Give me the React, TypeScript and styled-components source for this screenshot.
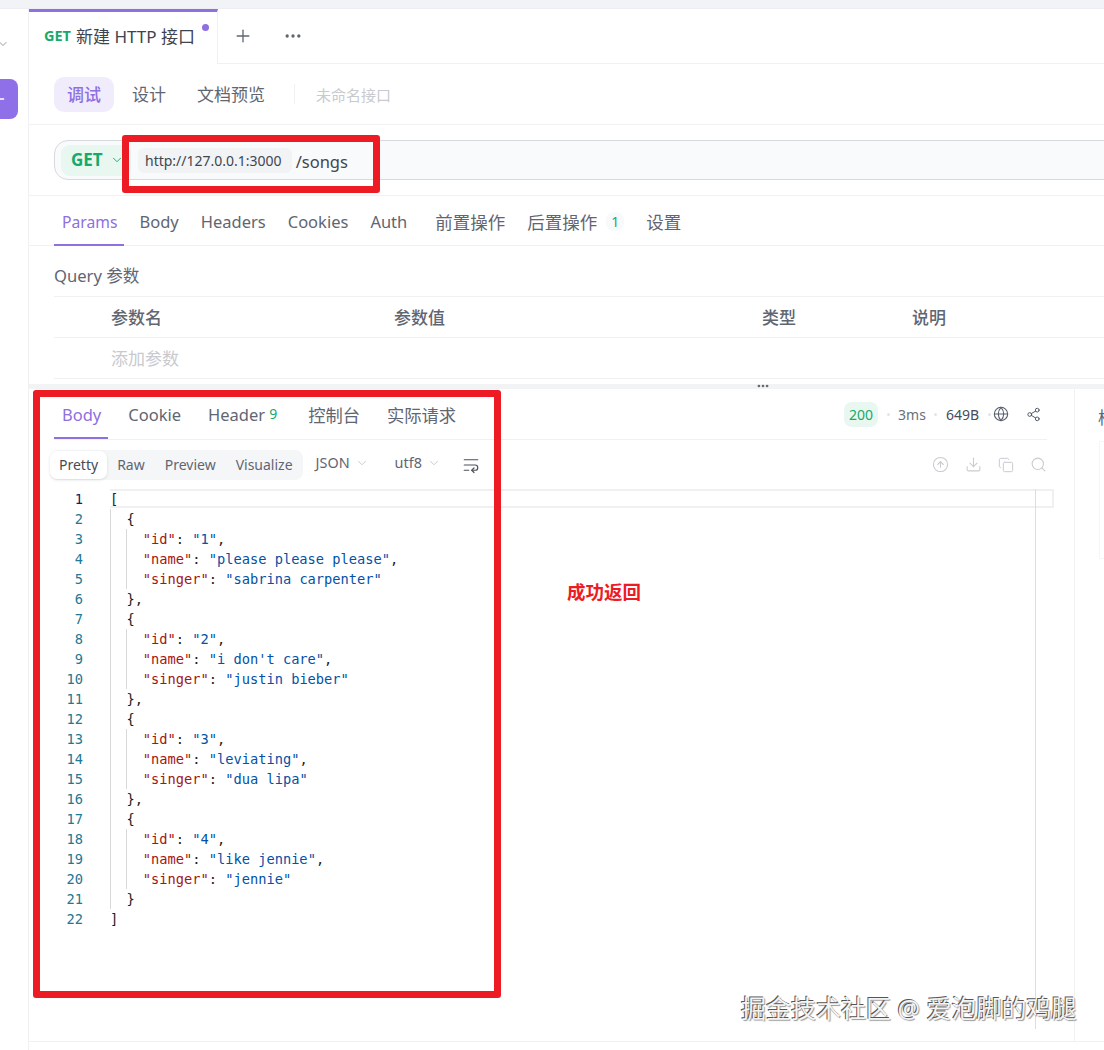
import { FC, Fragment } from 'react';
import styled, { createGlobalStyle } from 'styled-components';
import { ChevronDown, Copy, Download, Ellipsis, Globe, Plus, Search, Share2, CircleArrowUp, WrapText } from 'lucide-react';

const PURPLE = '#8e70e0';
const GREEN = '#17a96c';
const LINE = '#f0f1f3';
const TEXT = '#5f6672';
const SANS = '"Noto Sans", "Noto Sans CJK SC", sans-serif';

const songs = [
	{ id: '1', name: 'please please please', singer: 'sabrina carpenter' },
	{ id: '2', name: "i don't care", singer: 'justin bieber' },
	{ id: '3', name: 'leviating', singer: 'dua lipa' },
	{ id: '4', name: 'like jennie', singer: 'jennie' },
];

const requestTabs = ['Body', 'Headers', 'Cookies', 'Auth'];

const App: FC = () => {
	return (
		<>
			<GlobalStyle />
			<Page>
				<TopStrip />
				<Main>
					<Sidebar>
						<SideChevron>
							<ChevronDown size={12} strokeWidth={1.5} />
						</SideChevron>
						<NewButton>
							<Plus size={16} strokeWidth={2} />
						</NewButton>
					</Sidebar>
					<Content>
						<TabBar>
							<FileTab>
								<TabMethod>GET</TabMethod>
								<TabTitle>新建 HTTP 接口</TabTitle>
								<UnsavedDot />
							</FileTab>
							<TabAction>
								<Plus size={20} strokeWidth={1.6} />
							</TabAction>
							<TabAction>
								<Ellipsis size={20} strokeWidth={2} />
							</TabAction>
						</TabBar>

						<ModeBar>
							<ModePill $active>调试</ModePill>
							<ModePill>设计</ModePill>
							<ModePill>文档预览</ModePill>
							<ModeDivider />
							<ApiName>未命名接口</ApiName>
						</ModeBar>

						<UrlRow>
							<UrlBox>
								<MethodPill>
									GET
									<ChevronDown size={14} strokeWidth={1.6} />
								</MethodPill>
								<BaseUrl>http://127.0.0.1:3000</BaseUrl>
								<UrlPath>/songs</UrlPath>
							</UrlBox>
						</UrlRow>

						<RequestTabs>
							<ParamsTab $active>Params</ParamsTab>
							{requestTabs.map((tab) => (
								<RequestTab key={tab}>{tab}</RequestTab>
							))}
							<RequestTab $cjk $offset={6}>
								前置操作
							</RequestTab>
							<RequestTab $cjk>
								后置操作
								<CountBadge>1</CountBadge>
							</RequestTab>
							<RequestTab $cjk>设置</RequestTab>
						</RequestTabs>

						<QuerySection>
							<QueryTitle>Query 参数</QueryTitle>
							<ParamHead>
								<ParamCell $width={283}>参数名</ParamCell>
								<ParamCell $width={368}>参数值</ParamCell>
								<ParamCell $width={150}>类型</ParamCell>
								<ParamCell $width={150}>说明</ParamCell>
							</ParamHead>
							<ParamRow>添加参数</ParamRow>
						</QuerySection>

						<Resizer>
							<ResizeDots>
								<Ellipsis size={14} strokeWidth={2.6} />
							</ResizeDots>
						</Resizer>

						<ResponseArea>
							<ResponseMain>
								<ResponseHead>
									<ResponseTab $active>Body</ResponseTab>
									<ResponseTab>Cookie</ResponseTab>
									<ResponseTab>
										Header<HeaderCount>9</HeaderCount>
									</ResponseTab>
									<ResponseTab $cjk>控制台</ResponseTab>
									<ResponseTab $cjk>实际请求</ResponseTab>
									<Stats>
										<StatusPill>200</StatusPill>
										<StatDot />
										<Stat>3ms</Stat>
										<StatDot />
										<Stat $dark>649B</Stat>
										<StatDot />
										<StatIcon>
											<Globe size={16} strokeWidth={1.6} />
										</StatIcon>
										<StatIcon>
											<Share2 size={15} strokeWidth={1.6} />
										</StatIcon>
									</Stats>
								</ResponseHead>

								<Toolbar>
									<Segments>
										<Segment $active>Pretty</Segment>
										<Segment>Raw</Segment>
										<Segment>Preview</Segment>
										<Segment>Visualize</Segment>
									</Segments>
									<FormatSelect $gap={13}>
										JSON
										<ChevronDown size={14} strokeWidth={1.2} />
									</FormatSelect>
									<FormatSelect $gap={24}>
										utf8
										<ChevronDown size={14} strokeWidth={1.2} />
									</FormatSelect>
									<WrapButton>
										<WrapText size={18} strokeWidth={1.6} />
									</WrapButton>
									<ToolIcons>
										<CircleArrowUp size={17} strokeWidth={1.5} />
										<Download size={17} strokeWidth={1.5} />
										<Copy size={16} strokeWidth={1.5} />
										<Search size={17} strokeWidth={1.5} />
									</ToolIcons>
								</Toolbar>

								<Editor>
									<Gutter>
										{Array.from({ length: 22 }, (_, i) => (
											<LineNo key={i} $current={i === 0}>
												{i + 1}
											</LineNo>
										))}
									</Gutter>
									<Code>
										<CurrentLine />
										<CodeLine>[</CodeLine>
										<IndentGuide>
											{songs.map((song, i) => (
												<Fragment key={song.id}>
													<CodeLine>{'{'}</CodeLine>
													<IndentGuide>
														<CodeLine>
															<JsonKey>"id"</JsonKey>: <JsonStr>"{song.id}"</JsonStr>,
														</CodeLine>
														<CodeLine>
															<JsonKey>"name"</JsonKey>: <JsonStr>"{song.name}"</JsonStr>,
														</CodeLine>
														<CodeLine>
															<JsonKey>"singer"</JsonKey>: <JsonStr>"{song.singer}"</JsonStr>
														</CodeLine>
													</IndentGuide>
													<CodeLine>{i < songs.length - 1 ? '},' : '}'}</CodeLine>
												</Fragment>
											))}
										</IndentGuide>
										<CodeLine>]</CodeLine>
									</Code>
								</Editor>
							</ResponseMain>
							<SidePanel>
								<SideTitle>校验响应</SideTitle>
								<SideBox />
							</SidePanel>
						</ResponseArea>
						<BottomBar />
					</Content>
				</Main>

				<UrlMark />
				<ResponseMark />
				<MarkNote>成功返回</MarkNote>
				<Watermark>掘金技术社区 @ 爱泡脚的鸡腿</Watermark>
			</Page>
		</>
	);
};

const GlobalStyle = createGlobalStyle`
	html, body {
		margin: 0;
		padding: 0;
		background: #fff;
		overflow: hidden;
	}
	* {
		box-sizing: border-box;
	}
`;

const Page = styled.div`
	position: relative;
	width: 1104px;
	height: 1050px;
	overflow: hidden;
	font-family: ${SANS};
	color: ${TEXT};
	background: #fff;
`;

const TopStrip = styled.div`
	height: 9px;
	background: #f1f3f6;
	border-bottom: 1px solid #eceef1;
`;

const Main = styled.div`
	display: flex;
	height: 1041px;
`;

const Sidebar = styled.div`
	width: 29px;
	flex: none;
	border-right: 1px solid ${LINE};
`;

const SideChevron = styled.div`
	display: flex;
	height: 70px;
	padding: 29px 0 0 0;
	color: #777;
	margin-left: -3px;
`;

const NewButton = styled.div`
	display: flex;
	align-items: center;
	width: 18px;
	height: 40px;
	border-radius: 0 8px 8px 0;
	background: #9070e8;
	color: #fff;
	overflow: hidden;

	svg {
		margin-left: -9px;
		flex: none;
	}
`;

const Content = styled.div`
	flex: 1;
	min-width: 0;
	display: flex;
	flex-direction: column;
`;

const TabBar = styled.div`
	display: flex;
	align-items: center;
	height: 55px;
	flex: none;
	border-bottom: 1px solid ${LINE};
`;

const FileTab = styled.div`
	position: relative;
	display: flex;
	align-items: center;
	gap: 5px;
	width: 189px;
	height: 55px;
	padding: 0 0 6px 15px;
	background: #fff;
	border-top: 3px solid ${PURPLE};
	border-right: 1px solid ${LINE};
	margin-bottom: -1px;
`;

const TabMethod = styled.span`
	font-size: 14.5px;
	font-weight: 700;
	color: ${GREEN};
`;

const TabTitle = styled.span`
	font-size: 17px;
	color: #3d4350;
`;

const UnsavedDot = styled.span`
	position: absolute;
	top: 12px;
	left: 173px;
	width: 7px;
	height: 7px;
	border-radius: 50%;
	background: ${PURPLE};
`;

const TabAction = styled.div`
	display: flex;
	width: 20px;
	margin-left: 15px;
	margin-right: 15px;
	color: #5f6672;
`;

const ModeBar = styled.div`
	display: flex;
	align-items: center;
	height: 61px;
	flex: none;
	padding: 0 0 0 25px;
	border-bottom: 1px solid ${LINE};
`;

const ModePill = styled.div<{ $active?: boolean }>`
	display: flex;
	align-items: center;
	height: 35px;
	padding: 0 13px 2px;
	margin-right: 5px;
	border-radius: 10px;
	font-size: 17px;
	font-weight: ${(p) => (p.$active ? 500 : 400)};
	color: ${(p) => (p.$active ? PURPLE : TEXT)};
	background: ${(p) => (p.$active ? '#f1ecfc' : 'transparent')};
`;

const ModeDivider = styled.div`
	width: 1px;
	height: 20px;
	margin: 0 21px 0 11px;
	background: ${LINE};
`;

const ApiName = styled.span`
	font-size: 15px;
	color: #c8cacf;
`;

const UrlRow = styled.div`
	height: 71px;
	flex: none;
	padding: 15px 0 0 25px;
	border-bottom: 1px solid ${LINE};
`;

const UrlBox = styled.div`
	display: flex;
	align-items: center;
	height: 40px;
	margin-right: -20px;
	padding-left: 6px;
	border: 1px solid #d6d9dd;
	border-radius: 14px;
	background: #f9fafb;
`;

const MethodPill = styled.div`
	display: flex;
	align-items: center;
	gap: 7px;
	width: 70px;
	height: 31px;
	padding: 0 0 1px 10px;
	border-radius: 9px;
	background: #e8f7f0;
	font-size: 17px;
	font-weight: 700;
	color: ${GREEN};
`;

const BaseUrl = styled.div`
	display: flex;
	align-items: center;
	height: 25px;
	margin-left: 7px;
	padding: 0 10px 0 7px;
	border-radius: 6px;
	background: #f2f3f5;
	font-size: 14px;
	color: #40464f;
`;

const UrlPath = styled.span`
	margin-left: 4px;
	padding-top: 3px;
	font-size: 16.5px;
	color: #40464f;
`;

const RequestTabs = styled.div`
	display: flex;
	height: 50px;
	flex: none;
	gap: 7px;
	padding-left: 25px;
	border-bottom: 1px solid ${LINE};
`;

const RequestTab = styled.div<{ $active?: boolean; $cjk?: boolean; $offset?: number }>`
	display: flex;
	align-items: center;
	height: 50px;
	padding: 3px 7px 0 8px;
	margin-left: ${(p) => p.$offset ?? 0}px;
	font-size: ${(p) => (p.$cjk ? '17.5px' : '16.5px')};
	color: ${(p) => (p.$active ? PURPLE : TEXT)};
	border-bottom: 2px solid ${(p) => (p.$active ? PURPLE : 'transparent')};
`;

const ParamsTab = styled(RequestTab)`
	font-size: 15.7px;
`;

const CountBadge = styled.span`
	margin-left: 9px;
	padding: 0 5px;
	border-radius: 8px;
	background: #f8f9fa;
	font-size: 14px;
	color: ${GREEN};
`;

const QuerySection = styled.div`
	flex: none;
	padding-left: 25px;
`;

const QueryTitle = styled.div`
	height: 51px;
	display: flex;
	align-items: center;
	padding-top: 7px;
	font-size: 16.6px;
	color: ${TEXT};
	border-bottom: 1px solid ${LINE};
`;

const ParamHead = styled.div`
	display: flex;
	align-items: center;
	height: 41px;
	padding: 0 0 2px 57px;
	border-bottom: 1px solid ${LINE};
`;

const ParamCell = styled.div<{ $width: number }>`
	flex: none;
	width: ${(p) => p.$width}px;
	font-size: 17px;
	font-weight: 500;
	color: ${TEXT};
`;

const ParamRow = styled.div`
	display: flex;
	align-items: center;
	height: 41px;
	padding: 0 0 1px 57px;
	font-size: 17px;
	color: #c8cacf;
	border-bottom: 1px solid ${LINE};
`;

const Resizer = styled.div`
	position: relative;
	height: 10px;
	flex: none;
	padding-top: 5px;

	&::after {
		content: '';
		display: block;
		height: 5px;
		background: #f2f3f5;
	}
`;

const ResizeDots = styled.div`
	position: absolute;
	left: 727px;
	top: 0;
	display: flex;
	color: #666;
`;

const ResponseArea = styled.div`
	flex: 1;
	min-height: 0;
	display: flex;
`;

const ResponseMain = styled.div`
	width: 1046px;
	flex: none;
	padding: 0 27px 0 25px;
	border-right: 1px solid ${LINE};
`;

const ResponseHead = styled.div`
	display: flex;
	align-items: stretch;
	height: 51px;
	gap: 12px;
	border-bottom: 1px solid ${LINE};
`;

const ResponseTab = styled.div<{ $active?: boolean; $cjk?: boolean }>`
	display: flex;
	align-items: center;
	padding: 2px 7px 0 8px;
	font-size: ${(p) => (p.$cjk ? '17.3px' : '16.5px')};
	color: ${(p) => (p.$active ? PURPLE : TEXT)};
	border-bottom: 2px solid ${(p) => (p.$active ? PURPLE : 'transparent')};
`;

const HeaderCount = styled.sup`
	margin: 0 4px 0 4px;
	font-size: 14px;
	line-height: 1;
	color: ${GREEN};
`;

const Stats = styled.div`
	display: flex;
	align-items: center;
	margin-left: auto;
	font-size: 14px;
`;

const StatusPill = styled.div`
	display: flex;
	align-items: center;
	justify-content: center;
	width: 34px;
	height: 25px;
	border-radius: 8px;
	background: #e8f7f0;
	color: ${GREEN};
	font-size: 14px;
`;

const StatDot = styled.span`
	width: 3px;
	height: 3px;
	margin: 0 8.5px;
	border-radius: 50%;
	background: #e3e5e8;
`;

const Stat = styled.span<{ $dark?: boolean }>`
	color: ${(p) => (p.$dark ? '#474d59' : '#6a707b')};
`;

const StatIcon = styled.span`
	display: flex;
	margin-left: -6px;
	margin-right: 14px;
	color: #555c6a;

	&:last-child {
		margin: 0 6px 0 3px;
	}
`;

const Toolbar = styled.div`
	display: flex;
	align-items: center;
	height: 49px;
	margin-left: -4px;
`;

const Segments = styled.div`
	display: flex;
	align-items: center;
	height: 30px;
	border-radius: 8px;
	background: #f5f6f8;
`;

const Segment = styled.div<{ $active?: boolean }>`
	display: flex;
	align-items: center;
	height: 28px;
	padding: 0 ${(p) => (p.$active ? 9 : 10)}px;
	border-radius: 7px;
	font-size: 14px;
	color: ${(p) => (p.$active ? '#454b57' : TEXT)};
	background: ${(p) => (p.$active ? '#fff' : 'transparent')};
	box-shadow: ${(p) => (p.$active ? '0 1px 3px rgba(0, 0, 0, 0.12)' : 'none')};
`;

const FormatSelect = styled.div<{ $gap: number }>`
	display: flex;
	align-items: center;
	gap: 5px;
	margin: -4px 0 0 ${(p) => p.$gap}px;
	padding-right: 2px;
	font-size: 14.4px;
	color: ${TEXT};

	svg {
		color: #b5b8be;
	}
`;

const WrapButton = styled.div`
	display: flex;
	margin-left: 19px;
	color: #4b515c;
`;

const ToolIcons = styled.div`
	display: flex;
	align-items: center;
	gap: 16px;
	margin-left: auto;
	color: #c9cbd0;
`;

const Editor = styled.div`
	display: flex;
	font-family: "DejaVu Sans Mono", monospace;
	font-size: 13.7px;
	line-height: 20px;
`;

const Gutter = styled.div`
	width: 56px;
	flex: none;
	padding: 0 27px 0 0;
`;

const LineNo = styled.div<{ $current?: boolean }>`
	text-align: right;
	color: ${(p) => (p.$current ? '#0b216f' : '#237893')};
`;

const Code = styled.div`
	position: relative;
	flex: 1;
	margin-right: -7px;
	color: #222;
	white-space: pre;

	&::after {
		content: '';
		position: absolute;
		top: 0;
		bottom: -100px;
		right: 18px;
		width: 1px;
		background: #dcdde0;
	}
`;

const CurrentLine = styled.div`
	position: absolute;
	top: 0;
	left: 0;
	right: 0;
	height: 19px;
	border: 2px solid #f0f0f0;
	border-left: none;
`;

const CodeLine = styled.div`
	position: relative;
	height: 20px;
`;

const IndentGuide = styled.div`
	padding-left: 16.4px;
	box-shadow: inset 1px 0 0 #d9d9d9;
`;

const JsonKey = styled.span`
	color: #a31515;
`;

const JsonStr = styled.span`
	color: #0451a5;
`;

const SidePanel = styled.div`
	flex: 1;
	min-width: 0;
	overflow: hidden;
	padding: 15px 0 0 23px;
`;

const SideTitle = styled.div`
	width: 100px;
	font-size: 17px;
	color: ${TEXT};
`;

const SideBox = styled.div`
	width: 60px;
	height: 118px;
	margin: 12px 0 0 1px;
	border: 1px solid #f5f6f7;
`;

const BottomBar = styled.div`
	height: 9px;
	flex: none;
	border-top: 1px solid ${LINE};
`;

const RedFrame = styled.div`
	position: absolute;
	border: 7px solid #ed1c24;
	border-radius: 3px;
	pointer-events: none;
`;

const UrlMark = styled(RedFrame)`
	left: 122px;
	top: 135px;
	width: 258px;
	height: 58px;
`;

const ResponseMark = styled(RedFrame)`
	left: 33px;
	top: 390px;
	width: 468px;
	height: 608px;
`;

const MarkNote = styled.div`
	position: absolute;
	left: 567px;
	top: 580px;
	font-size: 18.5px;
	line-height: 24px;
	font-weight: 700;
	color: #ed1c24;
`;

const Watermark = styled.div`
	position: absolute;
	left: 741px;
	top: 991px;
	font-size: 25px;
	line-height: 34px;
	white-space: nowrap;
	color: #f4f4f4;
	text-shadow: -1px -1px 0 #555, 1px 1px 1px #999;
`;

export default App;
